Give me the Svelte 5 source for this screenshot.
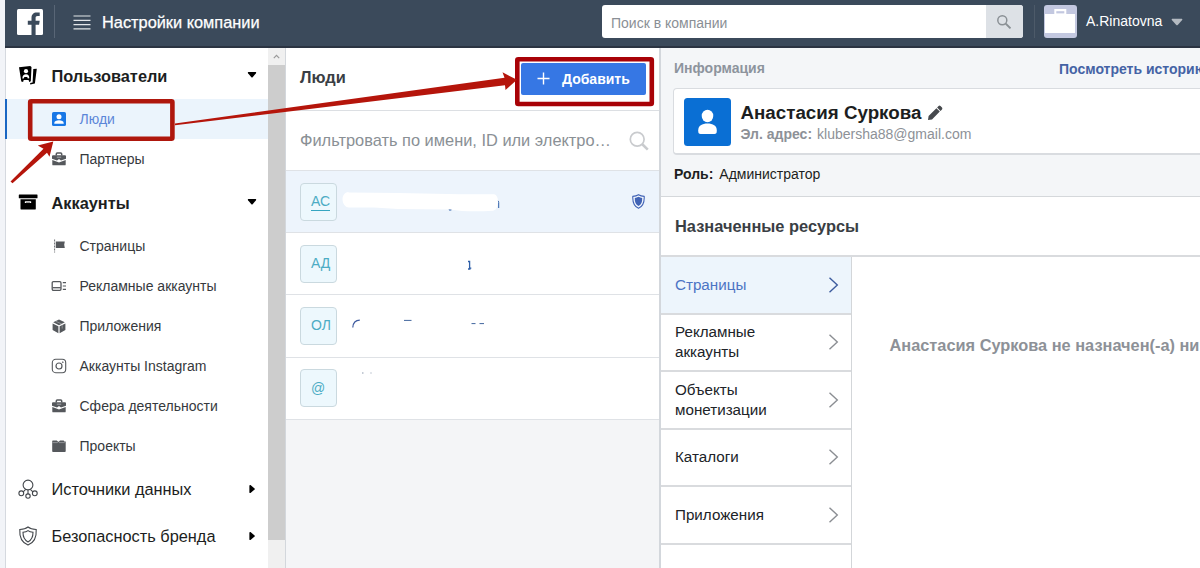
<script>
  const userItems = [
    { label: 'Люди', icon: 'person', active: true },
    { label: 'Партнеры', icon: 'case' }
  ];
  const accountItems = [
    { label: 'Страницы', icon: 'flag' },
    { label: 'Рекламные аккаунты', icon: 'ads' },
    { label: 'Приложения', icon: 'cube' },
    { label: 'Аккаунты Instagram', icon: 'insta' },
    { label: 'Сфера деятельности', icon: 'case' },
    { label: 'Проекты', icon: 'folder' }
  ];
  const sections = [
    { label: 'Пользователи', icon: 'badge', open: true, items: userItems },
    { label: 'Аккаунты', icon: 'archive', open: true, items: accountItems },
    { label: 'Источники данных', icon: 'nodes', items: [] },
    { label: 'Безопасность бренда', icon: 'shield', items: [] }
  ];
  const people = ['АС', 'АД', 'ОЛ', '@'];
  const tabs = ['Страницы', 'Рекламные аккаунты', 'Объекты монетизации', 'Каталоги', 'Приложения', ''];
</script>

{#snippet icon(name)}
  {#if name === 'person'}
    <svg width="14" height="14" viewBox="0 0 14 14"><rect width="14" height="14" rx="1.6" fill="#1877e6" /><circle cx="7" cy="4.800" r="2.500" fill="#fff" /><path d="M2.300 11.700V11C2.300 9 4.400 8.200 7 8.200s4.700.8 4.700 2.800v.7z" fill="#fff" /></svg>
  {:else if name === 'case'}
    <svg width="16" height="14" viewBox="0 0 16 14"><path d="M5.300 3.500V2c0-.7.4-1.100 1-1.100h3.400c.6 0 1 .4 1 1.100v1.500" fill="none" stroke="#55585c" stroke-width="1.500" /><path d="M2 3.200h12q1 0 1 1v2.500L10 8.600 8 7 6 8.600 1 6.700V4.200q0-1 1-1z" fill="#55585c" /><path d="M1.300 8l4.800 1.700 1.900.8 1.900-.8L14.700 8v4.400q0 .9-.9.900H2.200q-.9 0-.9-.9z" fill="#55585c" /><path d="M5.800 5.200h4.400" stroke="#b5b8bb" stroke-width=".8" /></svg>
  {:else if name === 'flag'}
    <svg width="16" height="14" viewBox="0 0 16 14"><path d="M3.600.5v13" stroke="#6a6d71" stroke-width="1" stroke-dasharray="2 1" /><path d="M4.800 2.500h9l-.6 3.200.6 3.400h-9z" fill="#55585c" /></svg>
  {:else if name === 'ads'}
    <svg width="16" height="12" viewBox="0 0 16 12"><rect x="1.200" y="1.700" width="8.800" height="8.600" rx="1.200" fill="none" stroke="#55585c" stroke-width="1.300" /><path d="M1.500 7.700h8.300" stroke="#55585c" stroke-width="1.300" /><path d="M11.800 2.600h3.200M11.800 6h3.200M11.800 9.400h3.200" stroke="#55585c" stroke-width="1.200" /></svg>
  {:else if name === 'cube'}
    <svg width="16" height="15" viewBox="0 0 16 15"><path d="M8 .6l5.800 2.700L8 6.200 2.200 3.300z" fill="#55585c" /><path d="M1.600 4.400l5.800 2.900v7L1.600 11zM14.400 4.400L8.600 7.300v7l5.800-3.300z" fill="#55585c" /><path d="M4.600 2.200l6.300 2.900M11.200 6v3.600" stroke="#bfc1c4" stroke-width=".5" /></svg>
  {:else if name === 'insta'}
    <svg width="16" height="16" viewBox="0 0 16 16" fill="none" stroke="#55585c"><rect x="1.300" y="1.300" width="13.400" height="13.400" rx="3.400" stroke-width="1.100" /><circle cx="8" cy="8" r="3" stroke-width="1.200" /><circle cx="11.800" cy="4.200" r=".5" fill="#55585c" stroke-width=".6" /></svg>
  {:else if name === 'folder'}
    <svg width="16" height="14" viewBox="0 0 16 14"><path d="M1.200 2.500c0-.7.300-1 1-1h3.600l1.300 1.300h.7l1.200-1.300h3.700l.6 1.100h1.400v9.600c0 .5-.3.800-.8.800H2c-.5 0-.8-.3-.8-.8z" fill="#55585c" /><path d="M1.500 3.600h4.800l1.400-1M8 3.600h5.800" stroke="#b8babd" stroke-width=".6" fill="none" /></svg>
  {:else if name === 'badge'}
    <svg width="20" height="20" viewBox="0 0 20 20"><path d="M1 2.200L12.200 1l1.300.9-.7 14.400-1.600.8-.6-2.200-4.900.2-.6 2-1.800-.5z" fill="#000" /><circle cx="8" cy="6.200" r="2.100" fill="#fff" /><path d="M4.300 13.500c.2-3.200 1.500-4.300 3.700-4.300s3.300 1.100 3.300 4l-1.500.2-.6-1.300H6.400l-.7 1.400z" fill="#fff" /><path d="M15.300 4l3.500-.3-1.900 14.900-4.600.8-.2-1.400 2.500-.5z" fill="#000" /></svg>
  {:else if name === 'archive'}
    <svg width="20" height="18" viewBox="0 0 20 18"><rect x=".8" y="1.400" width="18.700" height="3.800" rx=".5" fill="#000" /><path d="M2.500 6.200h15.300v9.200c0 .8-.4 1.200-1.200 1.200H3.700c-.8 0-1.200-.4-1.200-1.200z" fill="#000" /><rect x="6.800" y="8.200" width="6.400" height="1.900" rx=".6" fill="#fff" /><path d="M8 9.600h4" stroke="#444" stroke-width=".6" /></svg>
  {:else if name === 'nodes'}
    <svg width="20" height="20" viewBox="0 0 20 20" fill="none" stroke="#42464b" stroke-width="1.100"><circle cx="10" cy="6" r="4.900" /><circle cx="3.300" cy="14.300" r="2.400" /><circle cx="10" cy="17.100" r="2.200" /><circle cx="16.800" cy="14.300" r="2.400" /><path d="M7.700 10.300l-2.500 2.500M12.300 10.300l2.600 2.500M10 11v3.900" /></svg>
  {:else if name === 'shield'}
    <svg width="20" height="20" viewBox="0 0 20 20" fill="none" stroke="#42464b" stroke-width="1.100"><path d="M10 1c2.100 1.700 4.700 2.300 8.200 2.500.5 7.500-1.800 13-8.200 15.600C3.600 16.500 1.300 11 1.800 3.500 5.300 3.300 7.900 2.700 10 1z" /><path d="M10 4.600c1.400 1.100 3 1.500 5 1.700.1 4.800-1.300 7.700-5 9.600-3.700-1.900-5.100-4.800-5-9.600 2-.2 3.600-.6 5-1.700z" /></svg>
  {/if}
{/snippet}

<div class="page">
  <header>
    <svg class="logo" width="26" height="26" viewBox="0 0 26 26"><rect width="26" height="26" rx="1.500" fill="#fff" /><path d="M14.500 26V15.700h-3.700v-4h3.700V8.900c0-3.600 2-5.500 5.200-5.500 1.200 0 2.200.1 3 .2V7h-2c-1.800 0-2.100.9-2.100 2.100v2.600h4.100l-.6 4h-3.500V26z" fill="#3b4a5b" /></svg>
    <span class="rule"></span>
    <svg class="burger" width="18" height="15" viewBox="0 0 18 15"><path d="M.5 1h17M.5 5.300h17M.5 9.600h17M.5 13.900h17" stroke="#e4e7ea" stroke-width="1.200" /></svg>
    <span class="title">Настройки компании</span>
    <div class="search">
      <span>Поиск в компании</span>
      <i><svg width="16" height="16" viewBox="0 0 16 16" fill="none" stroke="#8a9095"><circle cx="6.300" cy="6.200" r="4.500" stroke-width="1.500" /><path d="M9.700 9.600l4.800 4.800" stroke-width="2" /></svg></i>
    </div>
    <span class="rule second"></span>
    <svg class="face" width="33" height="33" viewBox="0 0 33 33"><rect width="33" height="33" rx="3" fill="#c3c8e0" /><path d="M1 9h9.300V4h12v5H31v19H1z" fill="#fff" /><rect x="12.300" y="6.200" width="8" height="2.200" fill="#c3c8e0" /></svg>
    <span class="login">A.Rinatovna</span>
    <svg width="12" height="8" viewBox="0 0 12 8"><path d="M1.200.8h9.600q1 .2.400 1.200L6.700 7q-.7.700-1.400 0L.8 2Q.2 1 1.200.8z" fill="#b4bac1" /></svg>
  </header>

  <main>
    <nav>
      {#each sections as s}
        <div class="section">
          <b class="glyph">{@render icon(s.icon)}</b>
          <span class:strong={s.open}>{s.label}</span>
          {#if s.open}
            <svg width="10" height="8" viewBox="0 0 10 8"><path d="M1.300 1h7.400q.8.500.3 1.300L5.600 6.300q-.6.500-1.200 0L1 2.300Q.5 1.500 1.300 1z" /></svg>
          {:else}
            <svg width="10" height="10" viewBox="0 0 10 10"><path d="M2.400 1.500q.3-.7 1.100-.5L7.600 4.400q.6.600 0 1.200L3.500 9q-.8.200-1.100-.5z" /></svg>
          {/if}
        </div>
        {#each s.items as it}
          <div class="item" class:active={it.active}>
            <b class="glyph">{@render icon(it.icon)}</b><span>{it.label}</span>
          </div>
        {/each}
      {/each}
    </nav>

    <div class="scroll">
      <i><svg width="7" height="5" viewBox="0 0 7 5"><path d="M.8 4.200l2.700-2.900 2.700 2.900" fill="none" stroke="#9a9a9a" stroke-width="1.200" /></svg></i>
      <b></b>
    </div>

    <section class="people">
      <div class="head">
        <h2>Люди</h2>
        <button><svg width="13" height="13" viewBox="0 0 13 13"><path d="M6.500.5v12M.5 6.500h12" stroke="#fff" stroke-width="1.400" /></svg>Добавить</button>
      </div>
      <div class="filter">
        <span>Фильтровать по имени, ID или электро…</span>
        <svg width="20" height="20" viewBox="0 0 20 20" fill="none" stroke="#c9cbce"><circle cx="8.200" cy="8.200" r="6.900" stroke-width="1.700" /><path d="M13.300 13.300l5.500 5.300" stroke-width="2.600" /></svg>
      </div>
      {#each people as p, i}
        <div class="row" class:selected={i === 0}>
          <span class="ava"><em class:line={i === 0}>{p}</em></span>
          <svg class="marks" width="280" height="40" viewBox="342 0 280 40">
            {#if i === 0}
              <path d="M448.500 27h3.500l-.8 1.400h-2z" fill="#2f5fa8" /><path d="M497.200 18.500q1.500.3 1.500 2v5.500" stroke="#2f5fa8" stroke-width="1" fill="none" />
              <path d="M348.500 10.400L398 11l62 1.300h34c5.500.5 5.500 15.500-1 16.500-12 .8-22 .6-31 .3l-12-1.600-52-.5-24-1.500h-25c-8-.5-9-14.900-.5-15.500z" fill="#fff" />
            {:else if i === 1}
              <path d="M468 17.500h1.600v6.700h1.700M468 25h2.500" stroke="#2f5fa8" stroke-width="1.300" fill="none" />
            {:else if i === 2}
              <path d="M352.800 21.500c.3-4.300 2.300-7.300 7-7.300" stroke="#3d5a9e" stroke-width="1.200" fill="none" /><path d="M404 14.400h7.500M471.500 17.600h4M479.500 17.600h4.500" stroke="#42669e" stroke-width="1" />
            {:else}
              <path d="M362 5h1.500M370.500 5h1" stroke="#8b98ac" stroke-width="1" />
            {/if}
          </svg>
          {#if i === 0}
            <svg width="13" height="15" viewBox="0 0 13 15"><path d="M6.500.7c1.700 1 3.400 1.500 5.700 1.700.3 5.800-1.200 9.800-5.700 11.900C2 12.200.5 8.200.8 2.400 3.100 2.200 4.800 1.700 6.500.7z" fill="#f3f7fd" stroke="#4163b5" stroke-width="1.100" /><path d="M6.500 2.800c1.200.6 2.300 1 3.700 1.100.2 4-.9 6.600-3.700 8.100C3.700 10.500 2.600 7.900 2.800 3.900c1.400-.1 2.500-.5 3.700-1.100z" fill="#4163b5" /></svg>
          {/if}
        </div>
      {/each}
    </section>

    <section class="detail">
      <div class="info">
        <div class="caption"><h3>Информация</h3><a>Посмотреть историю</a></div>
        <div class="card">
          <svg width="47" height="48" viewBox="0 0 48 48" preserveAspectRatio="none"><rect width="48" height="48" rx="3.500" fill="#0a6fd4" /><ellipse cx="24" cy="18" rx="5.900" ry="6.200" fill="#fff" /><path d="M14.500 32.500c0-5 4-7 9.500-7s9.500 2 9.500 7c0 2.600-.6 3.400-2.500 3.400H17c-1.900 0-2.500-.8-2.500-3.400z" fill="#fff" /></svg>
          <div class="who">
            <div class="name">Анастасия Суркова
              <svg width="16" height="16" viewBox="0 0 16 16"><path d="M1 15l.6-4 7.800-7.800 3.400 3.400L5 14.600zM10.100 2.500L11.600 1q1-.8 1.900 0L15 2.500q.8.900 0 1.900l-1.500 1.500z" fill="#46494d" /></svg>
            </div>
            <div class="mail"><strong>Эл. адрес:</strong><span>klubersha88@gmail.com</span></div>
          </div>
        </div>
        <div class="role"><strong>Роль:</strong><span>Администратор</span></div>
      </div>
      <h2 class="assets">Назначенные ресурсы</h2>
      <div class="split">
        <div class="tabs">
          {#each tabs as t, i}
            <div class="tab" class:on={i === 0}>
              <span>{t}</span>
              {#if t}<svg width="11" height="18" viewBox="0 0 11 18"><path d="M1.500 1.700L9.300 9l-7.800 7.300" fill="none" stroke="currentColor" stroke-width="1.400" /></svg>{/if}
            </div>
          {/each}
        </div>
        <p>Анастасия Суркова не назначен(-a) ни</p>
      </div>
    </section>
  </main>

  <svg class="overlay" width="1200" height="568" viewBox="0 0 1200 568">
    <rect x="30.200" y="101.200" width="142.200" height="37.600" rx="1" fill="none" stroke="#af170d" stroke-width="4.600" />
    <rect x="517.300" y="59.300" width="134.500" height="44.700" rx="1" fill="none" stroke="#a80207" stroke-width="4.600" />
    <path d="M175 123.400L504.500 77.800 502.500 72.300 517 79.800 505.500 90 505 85.300 175 125.200z" fill="#b5150b" />
    <path d="M10.500 181.500L43.500 148.700 37.800 145.500 53.300 141.500 49.500 156.800 47 152.700 12.500 183.200z" fill="#b5150b" />
  </svg>
</div>

<style>
  :global(body) { margin: 0; }
  .page { position: relative; width: 1200px; height: 568px; box-sizing: border-box; padding-left: 5px; overflow: hidden; background: #f2f4f8; color: #1c1e21; font: 14px "Liberation Sans", Arial, sans-serif; display: flex; flex-direction: column; }
  h2, h3, p { margin: 0; }
  svg { display: block; flex: none; }
  header { height: 48px; box-sizing: border-box; background: #3b4a5b; border-bottom: 2px solid #2b3442; display: flex; align-items: center; padding: 0 16px 3px 12px; }
  .rule { width: 1px; height: 33px; background: #596676; margin: 0 18px 0 11px; }
  .burger { margin-top: 1px; }
  .title { color: #fff; font-size: 16.35px; margin-left: 11px; width: 500px; margin-top: 1px; -webkit-text-stroke: .25px #fff; }
  .search { width: 421px; height: 33px; background: #fff; border-radius: 3px; display: flex; align-items: center; overflow: hidden; flex: none; }
  .search span { flex: 1; padding: 2px 0 0 9px; color: #8a8f95; }
  .search i { width: 37.500px; height: 33px; background: #dde1e6; display: grid; place-items: center; }
  .rule.second { margin: 0 9.500px 0 10.500px; background: #4d5a69; }
  .login { color: #fff; margin: 0 9px 2px 9px; }

  main { flex: 1; display: flex; min-height: 0; }
  nav { width: 263px; box-sizing: border-box; padding-top: 4px; background: #fff; border-left: 1px solid #d5d9df; flex: none; }
  .section { height: 47px; box-sizing: border-box; display: flex; align-items: center; padding: 0 11px 1px 11px; font-size: 16.350px; }
  .section span { flex: 1; margin-left: 13.500px; }
  .section .strong { font-weight: bold; padding-top: 2px; }
  .section .glyph { width: 21px; display: grid; place-items: center; }
  .item { height: 40px; display: flex; align-items: center; padding-left: 45px; margin-left: -1px; color: #36393d; }
  .item .glyph { width: 17px; display: grid; place-items: center; }
  .item span { margin-left: 12.500px; padding-bottom: 1px; }
  .item.active { background: #ebf4fc; box-shadow: inset 2px 0 #1a66c2; color: #5b86d8; }

  .scroll { width: 17px; height: 520px; background: #f0f0f0; flex: none; }
  .scroll i { height: 17px; display: grid; place-items: center; }
  .scroll b { display: block; height: 475px; background: #cdcdcd; }

  .people { width: 376px; box-sizing: border-box; border: solid #d3d7dc; border-width: 0 2px 0 1px; background: #f4f5f7; flex: none; }
  .head { height: 63px; box-sizing: border-box; background: #fff; border-bottom: 1px solid #dcdfe3; display: flex; align-items: center; justify-content: space-between; padding: 0 13px 0 14px; }
  h2 { font-size: 16.400px; color: #3a3e44; }
  .head h2 { padding-bottom: 4px; }
  button { width: 125px; height: 32px; border: 0; border-radius: 2px; background: #3677e4; color: #fff; font: bold 14px "Liberation Sans", sans-serif; display: flex; align-items: center; gap: 12px; padding: 0 0 0 16px; margin-top: -1px; }
  .filter { height: 59px; background: #fff; display: flex; align-items: center; justify-content: space-between; padding: 0 10px 0 14px; color: #8a9095; font-size: 16.400px; }
  .row { height: 62.200px; box-sizing: border-box; border-top: 1px solid #dfe2e6; background: #fff; display: flex; align-items: center; padding: 0 14px; }
  .row:last-child { border-bottom: 1px solid #dfe2e6; height: 63px; }
  .row.selected { background: #edf4fc; }
  .ava { width: 37px; height: 38px; box-sizing: border-box; border: 1px solid #cad9df; border-radius: 4px; background: #edf8fd; display: flex; align-items: center; padding-left: 10px; color: #4cacc4; }
  em { font-style: normal; line-height: 18px; border-bottom: 1px solid transparent; }
  .line { border-color: #36a6c1; }
  .marks { margin-left: 5px; margin-right: 10px; }

  .detail { flex: 1; min-width: 0; overflow: hidden; background: #fff; display: flex; flex-direction: column; }
  .info { height: 149px; box-sizing: border-box; background: #f4f6f8; border-bottom: 1px solid #d5d8db; padding-left: 12px; flex: none; }
  .caption { height: 40px; display: flex; align-items: center; padding-left: 1px; white-space: nowrap; font-weight: bold; }
  h3 { font-size: 14px; color: #8d949d; width: 385px; flex: none; }
  a { color: #4463a5; padding-top: 1px; }
  .card { height: 67px; width: 560px; box-sizing: border-box; border: 1px solid #d9dce0; border-bottom-width: 2px; border-radius: 4px; background: #fff; display: flex; align-items: center; padding: 1px 0 0 9.500px; gap: 10px; }
  .who { padding-top: 3px; }
  .name { font-size: 18.750px; font-weight: bold; line-height: 22px; display: flex; gap: 6px; align-items: center; }
  .name svg { margin-top: -1px; }
  .mail { display: flex; gap: 5px; line-height: 20px; color: #8d9197; }
  .role { display: flex; gap: 6px; padding: 11px 0 0 1px; }
  .role strong { color: #1c1e21; }
  .assets { height: 58px; border-bottom: 2px solid #d9dbde; padding-left: 14px; display: flex; align-items: center; flex: none; }
  .split { display: flex; flex: 1; white-space: nowrap; }
  .tabs { width: 190.500px; box-sizing: border-box; border-right: 1px solid #d3d6d9; flex: none; }
  .tab { height: 57.500px; box-sizing: border-box; border-bottom: 2px solid #d9dbde; display: flex; align-items: center; justify-content: space-between; padding: 0 12px 0 14px; font-size: 15.200px; line-height: 20px; white-space: normal; color: #8b8e93; }
  .tab span { width: 110px; color: #202328; }
  .tab.on { background: #edf5fc; color: #3d5c9e; }
  .tab.on span { color: #4c74c4; }
  .split p { font-size: 16.350px; font-weight: bold; color: #8d9197; padding: 79px 0 0 38px; }
  .overlay { position: absolute; left: 0; top: 0; pointer-events: none; }
</style>
